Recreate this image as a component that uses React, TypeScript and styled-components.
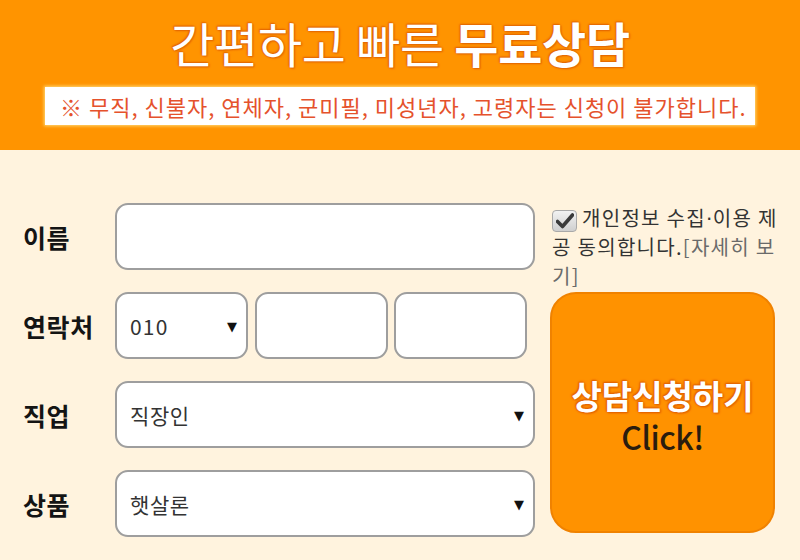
import React from 'react';
import styled, { createGlobalStyle } from 'styled-components';

const GlobalStyle = createGlobalStyle`
  html, body {
    margin: 0;
    padding: 0;
    background: #fff3de;
  }
  body {
    font-family: "Noto Sans CJK KR", "Noto Sans", sans-serif;
    width: 800px;
    height: 560px;
    overflow: hidden;
  }
`;

const KR = `"Noto Sans CJK KR", "Noto Sans", sans-serif`;

const Page = styled.div`
  width: 800px;
  height: 560px;
  display: flex;
  flex-direction: column;
  background: #fff3de;
`;

const Header = styled.header`
  background: #ff9400;
  height: 150px;
  box-sizing: border-box;
  padding-top: 14px;
  display: flex;
  flex-direction: column;
  align-items: center;
`;

const Title = styled.h1`
  margin: 0;
  font-family: ${KR};
  font-size: 48px;
  line-height: 56px;
  font-weight: 400;
  color: #fff;
  letter-spacing: -0.3px;
  text-shadow: 0 0 1px #d95d00, 0 0 2px #e06400, 1px 1px 2px #e46800,
    -1px -1px 2px #e46800;
  strong {
    font-weight: 700;
  }
`;

const Notice = styled.div`
  margin-top: 17px;
  width: 710px;
  height: 38px;
  box-sizing: border-box;
  background: #fff;
  box-shadow: 0 0 3px 1px #ffd978;
  padding-left: 15px;
  display: flex;
  align-items: center;
  font-family: ${KR};
  font-size: 22px;
  color: #e5522c;
  letter-spacing: 1px;
  white-space: nowrap;
`;

const Body = styled.main`
  flex: 1;
  display: flex;
  padding: 53px 0 0 23px;
  gap: 15px;
`;

const FormColumn = styled.div`
  width: 512px;
  display: flex;
  flex-direction: column;
  gap: 22px;
`;

const Row = styled.div`
  display: flex;
  align-items: center;
  height: 67px;
`;

const Label = styled.label`
  width: 92px;
  flex: none;
  font-family: ${KR};
  font-size: 25px;
  font-weight: 700;
  color: #141414;
  letter-spacing: 0.6px;
`;

const Fields = styled.div<{ $gap?: number }>`
  flex: 1;
  display: flex;
  gap: ${(p) => p.$gap ?? 0}px;
  height: 100%;
`;

const boxCss = `
  box-sizing: border-box;
  height: 100%;
  border: 2px solid #9e9e9e;
  border-radius: 13px;
  background: #fff;
  font-family: "Noto Sans CJK KR", "Noto Sans", sans-serif;
  font-size: 21px;
  letter-spacing: 0.6px;
  color: #333;
  outline: none;
`;

const TextInput = styled.input<{ $w?: number }>`
  ${boxCss}
  width: ${(p) => (p.$w ? `${p.$w}px` : '100%')};
  padding: 0 14px;
`;

const SelectWrap = styled.div<{ $w?: number }>`
  position: relative;
  height: 100%;
  width: ${(p) => (p.$w ? `${p.$w}px` : '100%')};
  flex: none;
`;

const Select = styled.select<{ $digits?: boolean }>`
  ${boxCss}
  width: 100%;
  appearance: none;
  -webkit-appearance: none;
  padding: 0 36px 0 13px;
  letter-spacing: ${(p) => (p.$digits ? '1.2px' : '0.6px')};
`;

const Arrow = styled.span`
  position: absolute;
  right: 11px;
  top: 50%;
  transform: translateY(-50%);
  font-size: 13px;
  color: #111;
  pointer-events: none;
  font-family: "DejaVu Sans", sans-serif;
`;

const SideColumn = styled.div`
  width: 230px;
  display: flex;
  flex-direction: column;
`;

const Agree = styled.div`
  font-family: ${KR};
  font-size: 20px;
  line-height: 29px;
  height: 87px;
  color: #333;
  letter-spacing: 1.3px;
  padding-left: 2px;
`;

const More = styled.span`
  color: #6a6a6a;
`;

const Dot = styled.span`
  font-family: "DejaVu Sans", sans-serif;
  letter-spacing: 0.5px;
  line-height: 1;
`;

const Check = styled.span`
  display: inline-flex;
  align-items: center;
  justify-content: center;
  vertical-align: -3px;
  width: 25px;
  height: 22px;
  box-sizing: border-box;
  margin-right: 5px;
  border: 1px solid #a9a9a9;
  border-radius: 4px;
  background: linear-gradient(#f2f2f2, #cfcfcf);
`;

const SubmitButton = styled.button`
  margin-top: 2px;
  width: 225px;
  height: 241px;
  box-sizing: border-box;
  border: 2px solid #f08200;
  border-radius: 26px;
  background: #ff9200;
  display: flex;
  flex-direction: column;
  align-items: center;
  justify-content: center;
  padding: 4px 0 0;
  cursor: pointer;
`;

const ButtonTitle = styled.span`
  font-family: ${KR};
  font-size: 33px;
  line-height: 42px;
  font-weight: 700;
  color: #fff;
  letter-spacing: 0;
  text-shadow: 0 0 2px #e06000, 0 0 3px #e86a00, 1px 1px 2px #e06000,
    -1px -1px 2px #e06000;
`;

const ButtonSub = styled.span`
  font-family: ${KR};
  font-size: 32px;
  line-height: 40px;
  font-weight: 500;
  color: #2a1c0e;
  letter-spacing: -0.5px;
`;

export default function App() {
  return (
    <>
      <GlobalStyle />
      <Page>
        <Header>
          <Title>
            간편하고 빠른 <strong>무료상담</strong>
          </Title>
          <Notice>
            ※ 무직, 신불자, 연체자, 군미필, 미성년자, 고령자는 신청이 불가합니다.
          </Notice>
        </Header>
        <Body>
          <FormColumn>
            <Row>
              <Label>이름</Label>
              <Fields>
                <TextInput type="text" />
              </Fields>
            </Row>
            <Row>
              <Label>연락처</Label>
              <Fields $gap={6.5}>
                <SelectWrap $w={133}>
                  <Select defaultValue="010" $digits>
                    <option>010</option>
                    <option>011</option>
                    <option>016</option>
                  </Select>
                  <Arrow>▼</Arrow>
                </SelectWrap>
                <TextInput type="text" $w={133} />
                <TextInput type="text" $w={133} />
              </Fields>
            </Row>
            <Row>
              <Label>직업</Label>
              <Fields>
                <SelectWrap>
                  <Select defaultValue="직장인">
                    <option>직장인</option>
                    <option>자영업</option>
                  </Select>
                  <Arrow>▼</Arrow>
                </SelectWrap>
              </Fields>
            </Row>
            <Row>
              <Label>상품</Label>
              <Fields>
                <SelectWrap>
                  <Select defaultValue="햇살론">
                    <option>햇살론</option>
                    <option>사잇돌</option>
                  </Select>
                  <Arrow>▼</Arrow>
                </SelectWrap>
              </Fields>
            </Row>
          </FormColumn>
          <SideColumn>
            <Agree>
              <Check>
                <svg width="18" height="16" viewBox="0 0 18 16">
                  <path
                    d="M1.5 8.5 L6.5 13.5 L16.5 2"
                    fill="none"
                    stroke="#3a3a3a"
                    strokeWidth="3.6"
                    strokeLinecap="round"
                    strokeLinejoin="round"
                  />
                </svg>
              </Check>
              개인정보 수집<Dot>·</Dot>이용 제공 동의합니다.
              <More>[자세히 보기]</More>
            </Agree>
            <SubmitButton type="button">
              <ButtonTitle>상담신청하기</ButtonTitle>
              <ButtonSub>Click!</ButtonSub>
            </SubmitButton>
          </SideColumn>
        </Body>
      </Page>
    </>
  );
}
